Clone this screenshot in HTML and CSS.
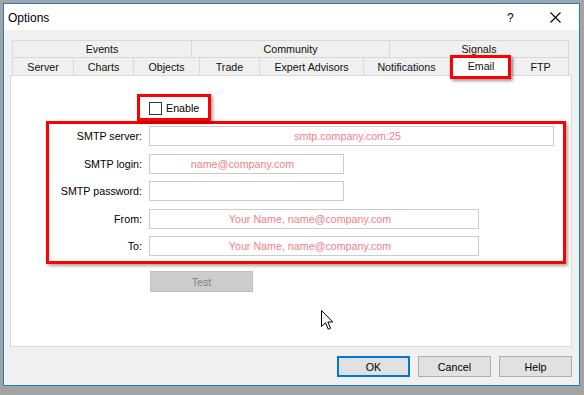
FILE: index.html
```html
<!DOCTYPE html>
<html>
<head>
<meta charset="utf-8">
<link rel="stylesheet" href="styles.css">
</head>
<body>
<div class="window">
  <div class="titlebar">
    <span class="title">Options</span>
    <span class="tb-help">?</span>
    <span class="tb-close"><svg width="11" height="11" viewBox="0 0 11 11"><path d="M0.5 0.5 L10.5 10.5 M10.5 0.5 L0.5 10.5" stroke="#000" stroke-width="1.1" fill="none"/></svg></span>
  </div>
  <div class="client">
    <div class="tabs">
      <div class="tabrow row-back">
        <div class="tab">Events</div>
        <div class="tab">Community</div>
        <div class="tab">Signals</div>
      </div>
      <div class="tabrow row-front">
        <div class="tab">Server</div>
        <div class="tab">Charts</div>
        <div class="tab">Objects</div>
        <div class="tab">Trade</div>
        <div class="tab">Expert Advisors</div>
        <div class="tab">Notifications</div>
        <div class="tab active">Email</div>
        <div class="tab">FTP</div>
      </div>
    </div>
    <div class="panel">
      <div class="enable-box"><span class="checkbox"></span><span class="enable-label">Enable</span></div>
      <div class="form-box">
        <label class="lbl">SMTP server:</label><div class="field w-long">smtp.company.com:25</div>
        <label class="lbl">SMTP login:</label><div class="field w-short">name@company.com</div>
        <label class="lbl">SMTP password:</label><div class="field w-short"></div>
        <label class="lbl">From:</label><div class="field w-mid">Your Name, name@company.com</div>
        <label class="lbl">To:</label><div class="field w-mid">Your Name, name@company.com</div>
      </div>
      <div class="test-btn">Test</div>
      <svg class="cursor" width="13" height="21" viewBox="0 0 13 21"><path d="M0.5 0.5 L0.5 16.5 L4.5 12.8 L7.3 19.3 L9.6 18.3 L6.9 12 L11.8 12 Z" fill="#fff" stroke="#000" stroke-width="1" stroke-linejoin="miter"/></svg>
    </div>
    <div class="buttons">
      <div class="btn btn-default">OK</div>
      <div class="btn">Cancel</div>
      <div class="btn">Help</div>
    </div>
  </div>
</div>
</body>
</html>
```
FILE: styles.css
```css
* { box-sizing: border-box; }
html, body { margin: 0; padding: 0; }
body {
  background: #a3a3a3;
  width: 584px;
  height: 395px;
  overflow: hidden;
  font-family: "Liberation Sans", Arial, sans-serif;
  font-size: 10.7px;
  color: #000;
}
.window {
  margin: 3px 0 0 3px;
  width: 577px;
  height: 383px;
  border: 1px solid #1c7fd6;
  background: #f0f0f0;
  display: flex;
  flex-direction: column;
}
.titlebar {
  height: 26px;
  background: #fff;
  display: flex;
  align-items: center;
  padding-left: 4px;
}
.title { font-size: 12px; flex: 1; padding-top: 1px; }
.tb-help {
  font-size: 12px;
  width: 12px;
  margin-right: 31px;
  padding-top: 1px;
}
.tb-close {
  width: 11px;
  height: 11px;
  margin-right: 18px;
  display: flex;
}
.client {
  flex: 1;
  padding: 10px 0 0 6px;
}
.tabs { margin-left: 2px; width: 557px; }
.tabrow {
  display: grid;
  border-left: 1px solid #d9d9d9;
}
.row-back { grid-template-columns: 179px 198px 179px; height: 17px; }
.row-front { grid-template-columns: 61px 60px 66px 60px 104px 86px 63px 56px; height: 18px; }
.tab {
  border-top: 1px solid #d9d9d9;
  border-right: 1px solid #d9d9d9;
  background: #f0f0f0;
  color: #111;
  display: flex;
  align-items: center;
  justify-content: center;
  white-space: nowrap;
}
.tab.active {
  background: #fff;
  position: relative;
  z-index: 2;
  height: 19px;
  padding-bottom: 3px;
}
.tab.active::after {
  content: "";
  position: absolute;
  left: 0;
  right: 1px;
  top: -3px;
  bottom: -3px;
  border: 3px solid #ff0000;
  box-shadow: 2px 2px 3px rgba(0,0,0,0.4);
}
.panel {
  position: relative;
  width: 562px;
  height: 272px;
  background: #fff;
  border: 1px solid #d9d9d9;
  padding-top: 18px;
}
.enable-box {
  margin-left: 126px;
  width: 74px;
  height: 27px;
  border: 3px solid #ff0000;
  box-shadow: 2px 2px 3px rgba(0,0,0,0.35);
  display: flex;
  align-items: center;
  padding-left: 9px;
  padding-top: 1px;
  position: relative;
  z-index: 1;
  background: #fff;
}
.checkbox {
  width: 13px;
  height: 13px;
  border: 1px solid #333;
  background: #fff;
  margin-right: 4px;
}
.form-box {
  margin-left: 35px;
  width: 520px;
  height: 143px;
  border: 3px solid #ff0000;
  box-shadow: 2px 2px 3px rgba(0,0,0,0.35);
  padding: 2px 0 5px 0;
  display: grid;
  grid-template-columns: 93px 1fr;
  grid-auto-rows: 20px;
  column-gap: 7px;
  row-gap: 7.5px;
}
.lbl {
  text-align: right;
  align-self: center;
  white-space: nowrap;
}
.field {
  height: 20px;
  border: 1px solid #cccccc;
  color: #f2808a;
  display: flex;
  align-items: center;
  justify-content: center;
  white-space: nowrap;
  padding-right: 8px;
  justify-self: start;
}
.w-long { width: 405px; }
.w-short { width: 195px; }
.w-mid { width: 330px; }
.test-btn {
  margin: 7px 0 0 139px;
  width: 103px;
  height: 21px;
  background: #cccccc;
  border: 1px solid #bfbfbf;
  color: #858085;
  display: flex;
  align-items: center;
  justify-content: center;
}
.cursor {
  position: absolute;
  left: 310px;
  top: 234px;
}
.buttons {
  width: 562px;
  margin-top: 9px;
  display: flex;
  justify-content: flex-end;
  gap: 8px;
}
.btn {
  width: 73px;
  height: 21px;
  background: #e1e1e1;
  border: 1px solid #adadad;
  display: flex;
  align-items: center;
  justify-content: center;
}
.btn-default { border: 2px solid #0078d7; }
```
